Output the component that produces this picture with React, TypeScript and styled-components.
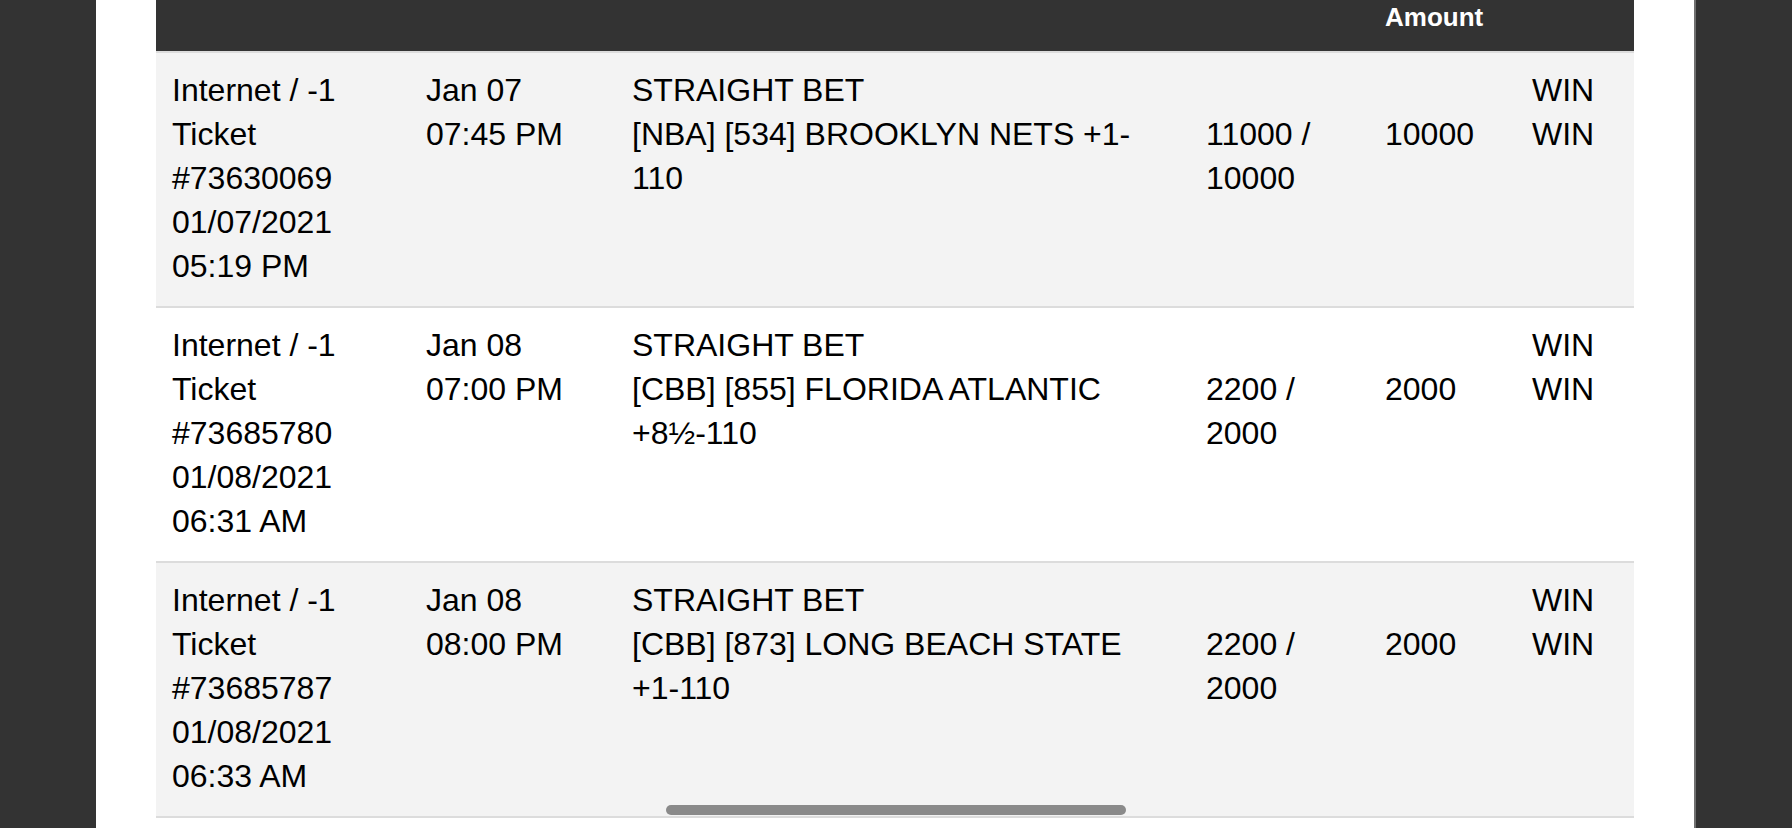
import React from 'react';
import styled, {createGlobalStyle} from 'styled-components';

const GlobalStyle = createGlobalStyle`
  html, body {
    margin: 0;
    padding: 0;
    background: #333333;
    font-family: "Liberation Sans", Arial, sans-serif;
    color: #000;
  }
  #root {
    min-height: 100vh;
  }
`;

type Bet = {
  ticket: string;
  placed: string;
  placedTime: string;
  gameDate: string;
  gameTime: string;
  wager: string;
  riskWin: string;
  amount: string;
  result: string[];
};

const bets: Bet[] = [
  {
    ticket: '#73630069',
    placed: '01/07/2021',
    placedTime: '05:19 PM',
    gameDate: 'Jan 07',
    gameTime: '07:45 PM',
    wager: '[NBA] [534] BROOKLYN NETS +1-110',
    riskWin: '11000 / 10000',
    amount: '10000',
    result: ['WIN', 'WIN'],
  },
  {
    ticket: '#73685780',
    placed: '01/08/2021',
    placedTime: '06:31 AM',
    gameDate: 'Jan 08',
    gameTime: '07:00 PM',
    wager: '[CBB] [855] FLORIDA ATLANTIC +8½-110',
    riskWin: '2200 / 2000',
    amount: '2000',
    result: ['WIN', 'WIN'],
  },
  {
    ticket: '#73685787',
    placed: '01/08/2021',
    placedTime: '06:33 AM',
    gameDate: 'Jan 08',
    gameTime: '08:00 PM',
    wager: '[CBB] [873] LONG BEACH STATE +1-110',
    riskWin: '2200 / 2000',
    amount: '2000',
    result: ['WIN', 'WIN'],
  },
];

const columns = [254, 206, 574, 179, 147, 118];

export default function App() {
  return (
    <>
      <GlobalStyle/>
      <Panel>
        <ScrollArea>
          <Table>
            <colgroup>
              {columns.map((w, i) => <col key={i} style={{width: w}}/>)}
            </colgroup>
            <thead>
              <tr>
                <HeadCell/>
                <HeadCell/>
                <HeadCell/>
                <HeadCell/>
                <HeadCell>Amount</HeadCell>
                <HeadCell/>
              </tr>
            </thead>
            <tbody>
              {bets.map((bet, i) => (
                <Row key={bet.ticket} $striped={i % 2 === 0}>
                  <Cell>
                    Internet / -1<br/>
                    Ticket {bet.ticket}<br/>
                    {bet.placed} {bet.placedTime}
                  </Cell>
                  <Cell>{bet.gameDate} {bet.gameTime}</Cell>
                  <Cell>
                    STRAIGHT BET<br/>
                    {bet.wager}
                  </Cell>
                  <Cell><br/>{bet.riskWin}</Cell>
                  <Cell><br/>{bet.amount}</Cell>
                  <Cell>{bet.result.map((r, j) => <div key={j}>{r}</div>)}</Cell>
                </Row>
              ))}
            </tbody>
          </Table>
          <ScrollThumb/>
        </ScrollArea>
      </Panel>
    </>
  );
}

const Panel = styled.div`
  box-sizing: border-box;
  width: 1600px;
  min-height: 100vh;
  margin: 0 auto;
  padding: 0 60px;
  background: #ffffff;
  border-right: 2px solid #707070;
`;

const ScrollArea = styled.div`
  position: relative;
  width: 1478px;
`;

const Table = styled.table`
  width: 1478px;
  table-layout: fixed;
  border-collapse: collapse;
  font-size: 32px;
  line-height: 44px;
`;

const HeadCell = styled.th`
  background: #333333;
  color: #ffffff;
  font-size: 26px;
  font-weight: 700;
  line-height: 30px;
  text-align: left;
  vertical-align: bottom;
  padding: 2px 16px 19px;
  border-bottom: 2px solid #dcdcdc;
`;

const Row = styled.tr<{ $striped: boolean }>`
  background: ${p => p.$striped ? '#f3f3f3' : '#ffffff'};
  border-bottom: 2px solid #dcdcdc;
`;

const Cell = styled.td`
  vertical-align: top;
  text-align: left;
  padding: 15px 24px 18px 16px;
  color: #000;
`;

const ScrollThumb = styled.div`
  position: absolute;
  left: 510px;
  bottom: 3px;
  width: 460px;
  height: 10px;
  border-radius: 5px;
  background: #8a8a8a;
`;
